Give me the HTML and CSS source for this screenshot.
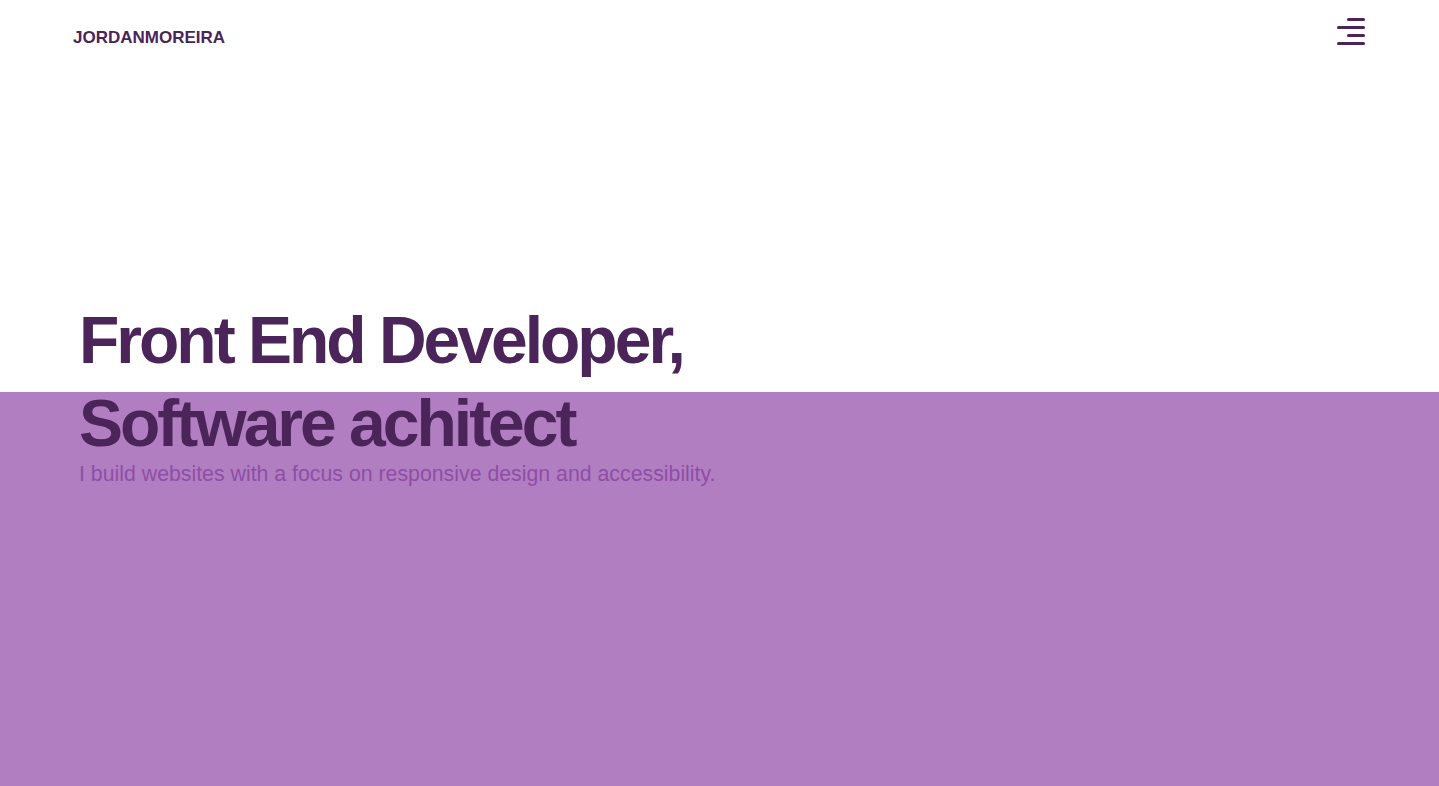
FILE: index.html
```html
<!DOCTYPE html>
<html lang="en">
<head>
<meta charset="utf-8">
<title>Jordan Moreira</title>
<link rel="stylesheet" href="styles.css">
</head>
<body>
<div class="page">
  <header class="header">
    <a class="logo" href="#">JORDANMOREIRA</a>
    <button class="menu" aria-label="Menu">
      <span class="bar short"></span>
      <span class="bar"></span>
      <span class="bar short"></span>
      <span class="bar"></span>
    </button>
  </header>
  <main class="hero">
    <h1 class="title">
      <span class="line">Front End Developer,</span>
      <span class="line">Software achitect</span>
    </h1>
    <p class="lead">I build websites with a focus on responsive design and accessibility.</p>
  </main>
</div>
</body>
</html>
```
FILE: styles.css
```css
* { box-sizing: border-box; }
html, body { margin: 0; padding: 0; }
body {
  font-family: "Liberation Sans", Arial, sans-serif;
  color: #4b2559;
}
.page {
  height: 100vh;
  display: flex;
  flex-direction: column;
  background: linear-gradient(to bottom, #ffffff 0, #ffffff 392px, #b17fc1 392px, #b17fc1 100%);
}
.header {
  display: flex;
  justify-content: space-between;
  align-items: center;
  padding: 17px 74px 0 73px;
  height: 46px;
}
.logo {
  font-size: 17px;
  font-weight: 700;
  color: #4b2559;
  text-decoration: none;
  margin-top: 12px;
}
.menu {
  display: flex;
  flex-direction: column;
  align-items: flex-end;
  gap: 5px;
  padding: 0;
  border: 0;
  background: none;
  width: 28px;
}
.bar {
  display: block;
  width: 28px;
  height: 3px;
  border-radius: 2px;
  background: #4b2559;
}
.bar.short { width: 18px; }
.hero {
  padding: 0 0 0 79px;
  margin-top: 253px;
}
.title {
  margin: 0;
  font-size: 66px;
  font-weight: 700;
  letter-spacing: -3px;
  line-height: 83px;
  color: #4b2559;
}
.line { display: block; }
.lead {
  margin: -3px 0 0;
  font-size: 21.3px;
  line-height: 24px;
  color: #8e4ea6;
}
```
